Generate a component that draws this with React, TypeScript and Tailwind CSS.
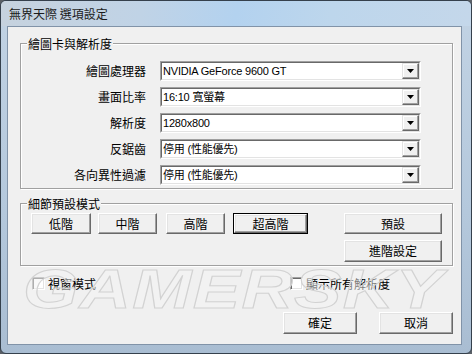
import React from "react"

const cjk = "font-['Noto_Sans_CJK_TC','Liberation_Sans',sans-serif]"
const mixed = "font-['Liberation_Sans','Noto_Sans_CJK_TC',sans-serif]"

const rows = [
  { label: "繪圖處理器", value: "NVIDIA GeForce 9600 GT" },
  { label: "畫面比率", value: "16:10 寬螢幕" },
  { label: "解析度", value: "1280x800" },
  { label: "反鋸齒", value: "停用 (性能優先)" },
  { label: "各向異性過濾", value: "停用 (性能優先)" },
]

function Btn({ label, className = "", focused = false }: { label: string; className?: string; focused?: boolean }) {
  return (
    <div className={`flex bg-[#f0f0f0] ${focused ? "border border-black" : ""} ${className}`}>
      <div className="flex flex-1 items-center justify-center border border-t-white border-l-white border-b-[#696969] border-r-[#696969] text-[12px] leading-none text-black shadow-[inset_-1px_-1px_0_#a0a0a0,inset_1px_1px_0_#e3e3e3]">
        {label}
      </div>
    </div>
  )
}

function Combo({ value }: { value: string }) {
  return (
    <div className="flex h-[20px] w-[261px] border border-t-[#a0a0a0] border-l-[#a0a0a0] border-b-white border-r-white bg-white">
      <div className="flex flex-1 border border-t-[#696969] border-l-[#696969] border-b-[#e3e3e3] border-r-[#e3e3e3]">
        <span className={`flex-1 pl-[1px] text-[11px] leading-[16px] tracking-[-0.2px] text-black ${mixed}`}>{value}</span>
        <div className="flex w-[17px] items-center justify-center border border-t-[#e3e3e3] border-l-[#e3e3e3] border-b-[#696969] border-r-[#696969] bg-[#f0f0f0] shadow-[inset_-1px_-1px_0_#a0a0a0,inset_1px_1px_0_#fff]">
          <svg width="7" height="4" viewBox="0 0 7 4">
            <path d="M0 0h7L3.5 4z" fill="#000" />
          </svg>
        </div>
      </div>
    </div>
  )
}

function Check({ label, className = "" }: { label: string; className?: string }) {
  return (
    <div className={`flex items-center gap-[3px] ${className}`}>
      <div className="h-[13px] w-[13px] border border-t-[#a0a0a0] border-l-[#a0a0a0] border-b-white border-r-white bg-white shadow-[inset_1px_1px_0_#696969,inset_-1px_-1px_0_#e3e3e3]" />
      <span className="text-[12px] leading-none text-black">{label}</span>
    </div>
  )
}

export default function App() {
  return (
    <div className={`h-[354px] w-[472px] bg-[#5a5f66] ${cjk}`}>
      <div className="relative flex h-full w-full flex-col overflow-hidden rounded-[6px] border border-[#35404c] bg-[linear-gradient(to_bottom,#c2d3e4,#b4c8dc_60%,#a9bdd2)] pb-[8px] pl-[6px] pr-[9px]">
        <div className="flex h-[25px] shrink-0 items-center bg-[linear-gradient(100deg,#c6d2de_0%,#c0d3e6_30%,#b3d2ef_50%,#bdd6ec_70%,#c4d7ea_100%)] -ml-[6px] -mr-[9px] pl-[8px] text-[12px] leading-none text-[#1b1b1b]">
          無界天際 選項設定
        </div>

        <div className="flex flex-1 flex-col border border-[#8193a8] bg-[#f0f0f0] pl-[12px] pr-[8px] pt-[16px]">
          <div className="relative h-[146px] border border-[#a0a0a0] pt-[17px] shadow-[inset_1px_1px_0_#fff,1px_1px_0_#fff]">
            <span className="absolute -top-[8px] left-[6px] bg-[#f0f0f0] px-[1px] text-[12px] leading-[16px] text-black">繪圖卡與解析度</span>
            <div className="grid grid-cols-[125px_261px] gap-x-[14px] gap-y-[6px]">
              {rows.map((row) => (
                <React.Fragment key={row.label}>
                  <span className="flex h-[20px] items-center justify-end text-[12px] leading-none text-black">{row.label}</span>
                  <Combo value={row.value} />
                </React.Fragment>
              ))}
            </div>
          </div>

          <div className="relative mt-[14px] flex h-[63px] border border-[#a0a0a0] pl-[10px] pt-[9px] shadow-[inset_1px_1px_0_#fff,1px_1px_0_#fff]">
            <span className="absolute -top-[8px] left-[6px] bg-[#f0f0f0] px-[1px] text-[12px] leading-[16px] text-black">細節預設模式</span>
            <div className="flex h-[21px]">
              <Btn label="低階" className="w-[60px]" />
              <Btn label="中階" className="ml-[7px] w-[59px]" />
              <Btn label="高階" className="ml-[9px] w-[59px]" />
              <Btn label="超高階" className="ml-[8px] w-[75px]" focused />
            </div>
            <div className="ml-[36px] flex flex-col gap-[6px]">
              <Btn label="預設" className="h-[21px] w-[98px]" />
              <Btn label="進階設定" className="h-[22px] w-[98px]" />
            </div>
          </div>

          <div className="mt-[11px] flex pl-[12px]">
            <Check label="視窗模式" className="w-[258px]" />
            <Check label="顯示所有解析度" />
          </div>

          <div className="mt-[22px] flex justify-end gap-[22px]">
            <Btn label="確定" className="h-[22px] w-[74px]" />
            <Btn label="取消" className="h-[22px] w-[74px]" />
          </div>
        </div>

        <span className="pointer-events-none absolute left-[22px] top-[260px] origin-left scale-x-[1.27] text-[56px] font-bold italic leading-none tracking-[1px] text-[#f3f3f3]/50 [-webkit-text-stroke:1px_#d2d2d2] font-['Liberation_Sans',sans-serif]">
          GAMERSKY
        </span>
      </div>
    </div>
  )
}
